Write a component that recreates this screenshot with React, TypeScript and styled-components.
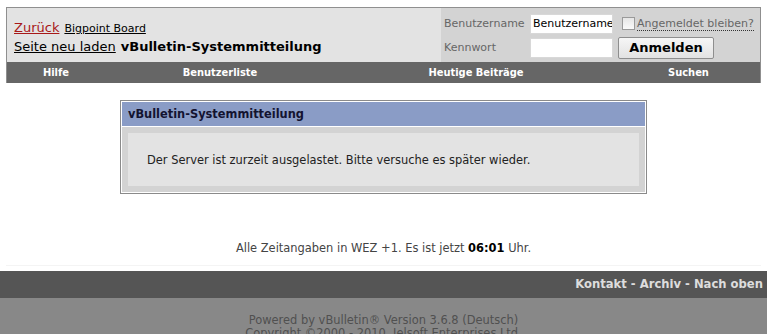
import React from "react";
import styled, { createGlobalStyle } from "styled-components";

const GlobalStyle = createGlobalStyle`
  html, body {
    margin: 0;
    padding: 0;
    background: #ffffff;
    font-family: "DejaVu Sans", sans-serif;
    font-size: 11.45px;
    color: #333333;
    overflow: hidden;
  }
`;

const Page = styled.div`
  padding: 7px 6px 0;
`;

const HeaderTable = styled.div`
  border: 1px solid #8f8f8f;
  border-bottom: none;
`;

const TopRow = styled.div`
  display: flex;
  height: 54px;
`;

const Breadcrumb = styled.div`
  flex: 1;
  background: #e3e3e3;
  padding: 11px 0 0 7px;
`;

const CrumbLine = styled.div`
  display: flex;
  align-items: baseline;
  gap: 5px;
  line-height: 18px;
`;

const Link = styled.a<{ $red?: boolean; $size?: number }>`
  color: ${(p) => (p.$red ? "#a81818" : "#000000")};
  font-size: ${(p) => p.$size || 13}px;
  text-decoration: underline;
`;

const PageTitle = styled.strong`
  color: #000000;
  font-size: 13px;
`;

const LoginCell = styled.div`
  width: 319px;
  box-sizing: border-box;
  background: #d3d3d3;
  padding: 4px 0 0 3px;
  display: grid;
  grid-template-columns: 86px 88px auto;
  grid-template-rows: 23px 25px;
  align-items: center;
  font-size: 11px;
  color: #666666;
`;

const Field = styled.input`
  box-sizing: border-box;
  width: 83px;
  height: 20px;
  border: 1px solid #d8d8d8;
  background: #ffffff;
  padding: 0 0 0 2px;
  font-family: "DejaVu Sans", sans-serif;
  font-size: 11px;
  color: #000;
  outline: none;
`;

const Remember = styled.label`
  display: flex;
  align-items: center;
  gap: 2px;
  margin-left: 4px;
`;

const Box = styled.span`
  display: inline-block;
  width: 11px;
  height: 11px;
  border: 1px solid #9a9a9a;
  background: linear-gradient(#e6e6e6, #fafafa);
`;

const Dotted = styled.span`
  border-bottom: 1px dotted #333;
  line-height: 13px;
`;

const Button = styled.button`
  width: 96px;
  height: 22px;
  border: 1px solid #8e8e8e;
  border-radius: 2px;
  background: linear-gradient(#f6f6f6, #e2e2e2);
  font-family: "DejaVu Sans", sans-serif;
  font-weight: bold;
  font-size: 13px;
  color: #000;
  padding: 0;
`;

const NavBar = styled.div`
  display: flex;
  height: 21px;
  background: #666666;
`;

const NavItem = styled.div<{ $w?: number }>`
  ${(p) => (p.$w ? `width: ${p.$w}px;` : "flex: 1;")}
  text-align: center;
  line-height: 22px;
  color: #ffffff;
  font-family: "DejaVu Sans Condensed", "DejaVu Sans", sans-serif;
  font-weight: bold;
  font-size: 11px;
`;

const MessageBox = styled.div`
  width: 523px;
  margin: 17px auto 0;
  border: 1px solid #8a8a8a;
  background: #ffffff;
  padding: 1px;
`;

const MessageHead = styled.div`
  background: #8a9cc6;
  height: 24px;
  line-height: 24px;
  padding-left: 6px;
  font-weight: bold;
  color: #131330;
  font-size: 11.4px;
`;

const MessageBody = styled.div`
  margin-top: 1px;
  background: #d3d3d3;
  padding: 6px 6px;
`;

const MessagePanel = styled.div`
  background: #e3e3e3;
  height: 53px;
  display: flex;
  align-items: center;
  padding-left: 19px;
  color: #222222;
`;

const TimeNote = styled.div`
  text-align: center;
  margin-top: 47px;
  padding-bottom: 10px;
  border-bottom: 1px solid #f4f4f4;
  color: #444444;
  line-height: 14px;
  b {
    color: #000;
  }
`;

const FooterLinks = styled.div`
  margin-top: 5px;
  background: #555555;
  height: 27px;
  line-height: 27px;
  text-align: right;
  padding-right: 4px;
  color: #dddddd;
  font-weight: bold;
  font-size: 11.6px;
`;

const Copyright = styled.div`
  background: #888888;
  height: 60px;
  padding-top: 16px;
  text-align: center;
  color: #505050;
  line-height: 13px;
`;

export default function App() {
  return (
    <>
      <GlobalStyle />
      <Page>
        <HeaderTable>
          <TopRow>
            <Breadcrumb>
              <CrumbLine>
                <Link $red>Zurück</Link>
                <Link $size={11}>Bigpoint Board</Link>
              </CrumbLine>
              <CrumbLine>
                <Link>Seite neu laden</Link>
                <PageTitle>vBulletin-Systemmitteilung</PageTitle>
              </CrumbLine>
            </Breadcrumb>
            <LoginCell>
              <span>Benutzername</span>
              <Field defaultValue="Benutzername" />
              <Remember>
                <Box />
                <Dotted>Angemeldet bleiben?</Dotted>
              </Remember>
              <span>Kennwort</span>
              <Field type="password" />
              <Button>Anmelden</Button>
            </LoginCell>
          </TopRow>
          <NavBar>
            <NavItem $w={98}>Hilfe</NavItem>
            <NavItem $w={230}>Benutzerliste</NavItem>
            <NavItem $w={282}>Heutige Beiträge</NavItem>
            <NavItem>Suchen</NavItem>
          </NavBar>
        </HeaderTable>
        <MessageBox>
          <MessageHead>vBulletin-Systemmitteilung</MessageHead>
          <MessageBody>
            <MessagePanel>
              Der Server ist zurzeit ausgelastet. Bitte versuche es später wieder.
            </MessagePanel>
          </MessageBody>
        </MessageBox>
        <TimeNote>
          Alle Zeitangaben in WEZ +1. Es ist jetzt <b>06:01</b> Uhr.
        </TimeNote>
      </Page>
      <FooterLinks>Kontakt - Archiv - Nach oben</FooterLinks>
      <Copyright>
        Powered by vBulletin® Version 3.6.8 (Deutsch)
        <br />
        Copyright ©2000 - 2010, Jelsoft Enterprises Ltd.
      </Copyright>
    </>
  );
}
